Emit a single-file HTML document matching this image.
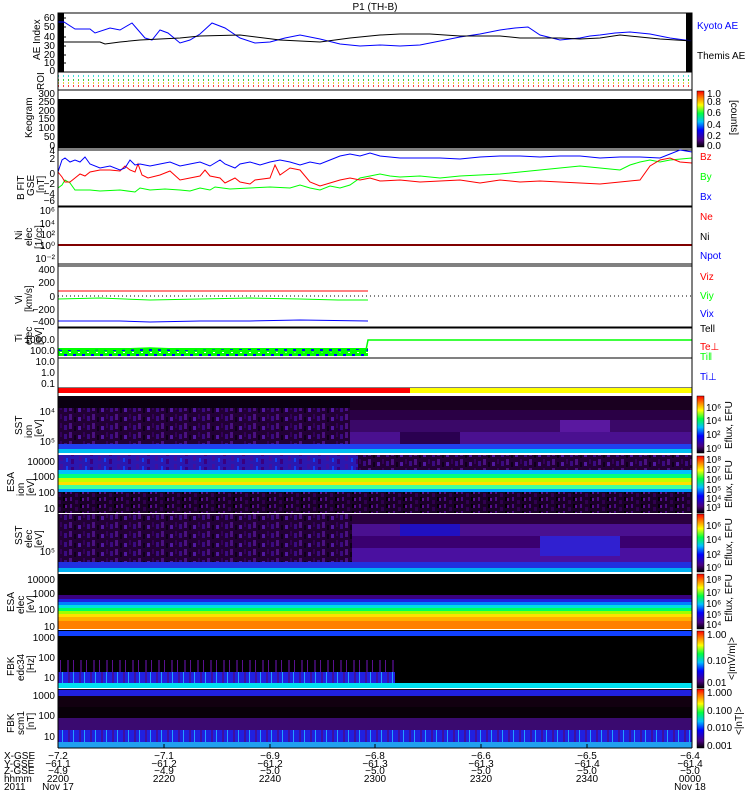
<!DOCTYPE html>
<html><head><meta charset="utf-8"><style>
body{margin:0;background:#fff;width:750px;height:800px;overflow:hidden}
svg{display:block}
text{font-family:"Liberation Sans",sans-serif;font-size:10px}
</style></head><body>
<svg width="750" height="800" viewBox="0 0 750 800" xmlns="http://www.w3.org/2000/svg">
<defs>
<linearGradient id="cb" x1="0" y1="1" x2="0" y2="0">
<stop offset="0" stop-color="#000"/><stop offset="0.12" stop-color="#4a0080"/><stop offset="0.3" stop-color="#0000ff"/><stop offset="0.45" stop-color="#00c0ff"/><stop offset="0.6" stop-color="#00ff40"/><stop offset="0.75" stop-color="#ffff00"/><stop offset="0.88" stop-color="#ff8000"/><stop offset="1" stop-color="#ff0000"/>
</linearGradient>
<pattern id="pn" width="23" height="9" patternUnits="userSpaceOnUse">
<rect width="23" height="9" fill="#220035"/><rect x="0" width="3" height="6" fill="#4a1080"/><rect x="5" y="3" width="2" height="5" fill="#0e0018"/><rect x="9" y="3" width="3" height="4" fill="#5018a0"/><rect x="14" width="2" height="5" fill="#33005a"/><rect x="18" y="2" width="3" height="5" fill="#3a0a80"/>
</pattern>
<pattern id="pd" width="17" height="7" patternUnits="userSpaceOnUse">
<rect width="17" height="7" fill="#1a0028"/><rect x="2" width="2" height="4" fill="#4a0a80"/><rect x="7" y="3" width="3" height="4" fill="#300050"/><rect x="12" width="2" height="4" fill="#000"/><rect x="14" y="1" width="2" height="3" fill="#5a1090"/>
</pattern>
<pattern id="pb" width="19" height="8" patternUnits="userSpaceOnUse">
<rect width="19" height="8" fill="#2a18b0"/><rect x="3" width="3" height="5" fill="#4010a0"/><rect x="9" y="2" width="2" height="4" fill="#1040f0"/><rect x="14" y="3" width="3" height="5" fill="#3a0080"/>
</pattern>
<pattern id="pf" width="13" height="10" patternUnits="userSpaceOnUse">
<rect width="13" height="10" fill="#000"/><rect x="2" width="2" height="10" fill="#3a0a60"/><rect x="8" width="1" height="10" fill="#5a1090"/>
</pattern>
<pattern id="pfb" width="11" height="10" patternUnits="userSpaceOnUse">
<rect width="11" height="10" fill="#2020e0"/><rect x="2" width="2" height="10" fill="#4010a0"/><rect x="7" width="1" height="10" fill="#20a0ff"/>
</pattern>
<pattern id="pt" width="9" height="8" patternUnits="userSpaceOnUse">
<rect width="9" height="8" fill="#00ff00"/><rect x="1" y="2" width="3" height="2" fill="#0000ff"/><rect x="5" y="5" width="3" height="2" fill="#0000ff"/><rect x="6" y="0" width="2" height="1" fill="#fff"/>
</pattern>
</defs>

<text x="375" y="10" text-anchor="middle">P1 (TH-B)</text>

<!-- AE panel -->
<rect x="58" y="13" width="6" height="59" fill="#000"/>
<rect x="686" y="13" width="6" height="59" fill="#000"/>
<polyline fill="none" stroke="#0000ff" stroke-width="1" points="58,22 64,22 75,29 90,29 95,33 110,28 120,30 132,23 145,38 152,40 160,30 168,33 180,43 190,40 200,34 212,23 225,28 240,38 255,43 270,42 285,38 300,35 320,39 340,44 360,46 380,45 400,46 420,45 440,41 460,37 480,34 500,30 515,28 528,27 540,35 560,40 580,38 590,36 600,35 615,33 630,32 650,34 670,38 692,41"/>
<polyline fill="none" stroke="#000" stroke-width="1" points="58,42 100,42 105,44 120,42 140,40 160,39 180,38 200,36 240,35 280,40 320,42 350,38 380,35 400,34 430,34 460,36 500,36 520,38 560,38 580,39 600,38 620,35 640,37 660,39 692,41"/>
<rect x="58" y="13" width="634" height="59" fill="none" stroke="#000"/>
<g stroke="#000">
<line x1="58" y1="18" x2="66" y2="18"/><line x1="58" y1="27" x2="66" y2="27"/><line x1="58" y1="37" x2="66" y2="37"/><line x1="58" y1="46" x2="66" y2="46"/><line x1="58" y1="55" x2="66" y2="55"/><line x1="58" y1="63" x2="66" y2="63"/>
</g>
<g text-anchor="end"><text x="55" y="21">60</text><text x="55" y="30">50</text><text x="55" y="40">40</text><text x="55" y="49">30</text><text x="55" y="58">20</text><text x="55" y="66">10</text><text x="55" y="74">0</text></g>
<text transform="translate(40,60) rotate(-90)">AE Index</text>
<text x="697" y="29" fill="#0000ff">Kyoto AE</text>
<text x="697" y="59">Themis AE</text>

<!-- ROI -->
<g stroke-dasharray="1 4" stroke-width="1.5">
<line x1="58" y1="76" x2="692" y2="76" stroke="#00d0d0"/>
<line x1="58" y1="80" x2="692" y2="80" stroke="#00c000"/>
<line x1="58" y1="83" x2="692" y2="83" stroke="#e0c000"/>
<line x1="58" y1="86" x2="692" y2="86" stroke="#ff0000"/>
</g>
<text transform="translate(44,90) rotate(-90)" font-size="9">ROI</text>

<!-- Keogram -->
<rect x="58" y="99" width="634" height="49" fill="#000"/>
<rect x="58" y="90" width="634" height="58" fill="none" stroke="#000"/>
<g text-anchor="end"><text x="55" y="97">300</text><text x="55" y="105">250</text><text x="55" y="114">200</text><text x="55" y="122">150</text><text x="55" y="131">100</text><text x="55" y="140">50</text><text x="55" y="149">0</text></g>
<text transform="translate(32,138) rotate(-90)">Keogram</text>
<rect x="697" y="91" width="7" height="56" fill="url(#cb)" stroke="#000" stroke-width="0.5"/>
<g font-size="9"><text x="707" y="97">1.0</text><text x="707" y="105">0.8</text><text x="707" y="116">0.6</text><text x="707" y="128">0.4</text><text x="707" y="139">0.2</text><text x="707" y="149">0.0</text></g>
<text transform="translate(731,100) rotate(90)" font-size="9">[counts]</text>

<!-- B -->
<rect x="58" y="150" width="634" height="56" fill="none" stroke="#000"/>
<polyline fill="none" stroke="#00ff00" points="58,188 62,185 65,180 70,183 75,190 90,190 100,191 120,190 135,192 140,188 150,190 165,189 180,190 190,191 200,188 210,190 215,187 230,189 250,188 270,187 290,188 300,185 310,188 320,190 330,186 340,188 350,185 360,178 370,176 380,174 390,176 400,177 420,176 440,178 460,176 480,175 500,174 520,172 540,170 560,168 580,166 600,168 620,170 630,165 640,162 650,160 660,162 670,160 692,158"/>
<polyline fill="none" stroke="#ff0000" stroke-width="1" points="58,172 62,177 65,182 70,182 75,178 80,174 85,176 90,172 100,170 110,170 120,171 125,166 130,170 135,172 138,164 142,175 148,178 160,175 170,171 180,180 190,178 200,176 205,170 210,176 220,178 225,183 235,178 240,182 250,184 255,180 270,178 275,165 280,175 290,168 300,170 310,182 320,186 330,183 340,180 350,178 360,180 370,178 380,181 400,180 420,182 440,181 460,180 480,183 500,180 520,182 540,181 560,182 580,183 600,184 620,182 640,180 650,166 660,160 670,158 680,162 692,163"/>
<polyline fill="none" stroke="#0000ff" stroke-width="1" points="58,172 62,160 65,158 70,162 75,160 80,162 85,157 90,164 100,168 110,166 120,170 125,168 130,160 135,165 140,164 150,166 160,164 170,162 180,166 190,164 200,162 210,166 220,160 225,164 235,168 240,164 250,162 260,165 270,162 280,160 290,162 300,165 310,162 320,164 330,160 340,156 350,154 360,156 370,153 380,156 400,158 420,158 440,158 460,159 480,157 500,156 520,156 540,157 560,156 580,156 600,158 620,157 640,157 660,158 670,154 680,150 692,152"/>
<g text-anchor="end"><text x="55" y="154">4</text><text x="55" y="162">2</text><text x="55" y="177">0</text><text x="55" y="187">−2</text><text x="55" y="197">−4</text><text x="55" y="204">−6</text></g>
<text transform="translate(24,200) rotate(-90)" font-size="9">B FIT</text>
<text transform="translate(34,196) rotate(-90)" font-size="9">GSE</text>
<text transform="translate(44,193) rotate(-90)" font-size="9">[nT]</text>
<text x="700" y="160" fill="#ff0000">Bz</text><text x="700" y="180" fill="#00ff00">By</text><text x="700" y="200" fill="#0000ff">Bx</text>

<!-- Ni -->
<rect x="58" y="207" width="634" height="57" fill="none" stroke="#000"/>
<line x1="58" y1="245" x2="692" y2="245" stroke="#000" stroke-width="2"/>
<line x1="58" y1="245" x2="692" y2="245" stroke="#ff0000"/>
<g text-anchor="end" font-size="9"><text x="55" y="214">10⁶</text><text x="55" y="227">10⁴</text><text x="55" y="238">10²</text><text x="55" y="249">10⁰</text><text x="55" y="262">10⁻²</text></g>
<text transform="translate(22,240) rotate(-90)" font-size="9">Ni</text>
<text transform="translate(32,246) rotate(-90)" font-size="9">elec</text>
<text transform="translate(42,249) rotate(-90)" font-size="9">[1/cc]</text>
<text x="700" y="220" fill="#ff0000">Ne</text><text x="700" y="240">Ni</text><text x="700" y="259" fill="#0000ff">Npot</text>

<!-- Vi -->
<rect x="58" y="266" width="634" height="61" fill="none" stroke="#000"/>
<line x1="58" y1="291" x2="368" y2="291" stroke="#ff0000"/>
<line x1="58" y1="296" x2="692" y2="296" stroke="#000" stroke-dasharray="1 3"/>
<polyline fill="none" stroke="#00ff00" points="58,299 100,298 150,300 200,299 250,298 300,299 338,300 368,300"/>
<polyline fill="none" stroke="#0000ff" points="58,321 120,321 150,322 200,321 250,321 300,320 368,321"/>
<g text-anchor="end"><text x="55" y="273">400</text><text x="55" y="286">200</text><text x="55" y="300">0</text><text x="55" y="313">−200</text><text x="55" y="325">−400</text></g>
<text transform="translate(22,304) rotate(-90)" font-size="9">Vi</text>
<text transform="translate(32,312) rotate(-90)" font-size="9">[km/s]</text>
<text x="700" y="280" fill="#ff0000">Viz</text><text x="700" y="299" fill="#00ff00">Viy</text><text x="700" y="317" fill="#0000ff">Vix</text>

<!-- Ti -->
<rect x="58" y="328" width="634" height="30" fill="none" stroke="#000"/>
<rect x="58" y="358" width="634" height="30" fill="none" stroke="#000"/>
<rect x="58" y="348" width="310" height="8" fill="url(#pt)"/>
<polyline fill="none" stroke="#00ff00" stroke-width="1.5" points="60,349 100,350 150,348 200,350 260,351 300,352 340,352 366,350 368,340 692,340"/>
<g text-anchor="end"><text x="55" y="343">1000.0</text><text x="55" y="354">100.0</text><text x="55" y="365">10.0</text><text x="55" y="376">1.0</text><text x="55" y="387">0.1</text></g>
<text transform="translate(22,342) rotate(-90)" font-size="9">Ti</text>
<text transform="translate(32,345) rotate(-90)" font-size="9">elec</text>
<text transform="translate(42,345) rotate(-90)" font-size="9">[eV]</text>
<text x="700" y="332">Tell</text><text x="700" y="350" fill="#ff0000">Te⊥</text><text x="700" y="360" fill="#00ff00">Ti‖</text><text x="700" y="380" fill="#0000ff">Ti⊥</text>

<!-- mode bar -->
<rect x="58" y="388" width="352" height="5" fill="#ff0000"/>
<rect x="410" y="388" width="282" height="5" fill="#ffff00"/>

<!-- SST ion -->
<rect x="58" y="396" width="634" height="57" fill="url(#pn)"/>
<rect x="58" y="396" width="634" height="12" fill="#0a0010"/>
<rect x="350" y="396" width="342" height="14" fill="#1a0020"/>
<rect x="350" y="410" width="342" height="10" fill="#2a0045"/>
<rect x="350" y="420" width="342" height="12" fill="#3a0868"/>
<rect x="350" y="432" width="342" height="12" fill="#4a1090"/>
<rect x="400" y="432" width="60" height="12" fill="#2a0050"/>
<rect x="560" y="420" width="50" height="12" fill="#5a18a0"/>
<rect x="58" y="444" width="634" height="5" fill="#2040f0"/>
<rect x="58" y="449" width="634" height="4" fill="#00c0f0"/>
<rect x="697" y="396" width="7" height="57" fill="url(#cb)" stroke="#000" stroke-width="0.5"/>
<g text-anchor="end" font-size="9"><text x="55" y="415">10⁴</text><text x="55" y="445">10⁵</text></g>
<text transform="translate(22,435) rotate(-90)" font-size="9">SST</text>
<text transform="translate(32,438) rotate(-90)" font-size="9">ion</text>
<text transform="translate(42,437) rotate(-90)" font-size="9">[eV]</text>
<g font-size="8"><text x="706" y="411">10⁶</text><text x="706" y="424">10⁴</text><text x="706" y="438">10²</text><text x="706" y="452">10⁰</text></g>
<text transform="translate(732,449) rotate(-90)" font-size="9">Eflux, EFU</text>

<!-- ESA ion -->
<rect x="58" y="455" width="634" height="58" fill="url(#pd)"/>
<rect x="58" y="455" width="300" height="15" fill="url(#pb)"/>
<rect x="358" y="455" width="334" height="15" fill="url(#pn)"/>
<rect x="58" y="470" width="634" height="4" fill="#00c0ff"/>
<rect x="58" y="474" width="634" height="4" fill="#00ff80"/>
<rect x="58" y="478" width="634" height="4" fill="#c0ff00"/>
<rect x="58" y="482" width="634" height="3" fill="#ffe000"/>
<rect x="58" y="485" width="634" height="4" fill="#40ffa0"/>
<rect x="58" y="489" width="634" height="3" fill="#00a0ff"/>
<rect x="697" y="456" width="7" height="57" fill="url(#cb)" stroke="#000" stroke-width="0.5"/>
<g text-anchor="end" font-size="9"><text x="55" y="465">10000</text><text x="55" y="480">1000</text><text x="55" y="496">100</text><text x="55" y="512">10</text></g>
<text transform="translate(14,492) rotate(-90)" font-size="9">ESA</text>
<text transform="translate(24,496) rotate(-90)" font-size="9">ion</text>
<text transform="translate(34,496) rotate(-90)" font-size="9">[eV]</text>
<g font-size="7"><text x="706" y="463">10⁸</text><text x="706" y="473">10⁷</text><text x="706" y="483">10⁶</text><text x="706" y="493">10⁵</text><text x="706" y="502">10⁴</text><text x="706" y="511">10³</text></g>
<text transform="translate(732,508) rotate(-90)" font-size="9">Eflux, EFU</text>

<!-- SST elec -->
<rect x="58" y="514" width="634" height="58" fill="url(#pn)"/>
<rect x="352" y="514" width="340" height="10" fill="#2a0040"/>
<rect x="352" y="524" width="340" height="12" fill="#4a1090"/>
<rect x="352" y="536" width="340" height="12" fill="#3a0070"/>
<rect x="352" y="548" width="340" height="14" fill="#4a10a0"/>
<rect x="540" y="536" width="80" height="20" fill="#3020d0"/>
<rect x="400" y="524" width="60" height="12" fill="#2010c0"/>
<rect x="58" y="562" width="634" height="6" fill="#2030e0"/>
<rect x="58" y="568" width="634" height="4" fill="#00b0f0"/>
<rect x="697" y="514" width="7" height="58" fill="url(#cb)" stroke="#000" stroke-width="0.5"/>
<g text-anchor="end" font-size="9"><text x="55" y="555">10⁵</text></g>
<text transform="translate(22,545) rotate(-90)" font-size="9">SST</text>
<text transform="translate(32,548) rotate(-90)" font-size="9">elec</text>
<text transform="translate(42,548) rotate(-90)" font-size="9">[eV]</text>
<g font-size="8"><text x="706" y="529">10⁶</text><text x="706" y="543">10⁴</text><text x="706" y="558">10²</text><text x="706" y="571">10⁰</text></g>
<text transform="translate(732,566) rotate(-90)" font-size="9">Eflux, EFU</text>

<!-- ESA elec -->
<rect x="58" y="574" width="634" height="55" fill="#000"/>
<rect x="58" y="595" width="634" height="4" fill="#3a0080"/>
<rect x="58" y="599" width="634" height="3" fill="#2020e0"/>
<rect x="58" y="602" width="634" height="3" fill="#0080ff"/>
<rect x="58" y="605" width="634" height="3" fill="#00e0e0"/>
<rect x="58" y="608" width="634" height="3" fill="#00ff60"/>
<rect x="58" y="611" width="634" height="3" fill="#a0ff00"/>
<rect x="58" y="614" width="634" height="3" fill="#ffe000"/>
<rect x="58" y="617" width="634" height="4" fill="#ffb000"/>
<rect x="58" y="621" width="634" height="8" fill="#ff8000"/>
<rect x="697" y="574" width="7" height="55" fill="url(#cb)" stroke="#000" stroke-width="0.5"/>
<g text-anchor="end" font-size="9"><text x="55" y="583">10000</text><text x="55" y="597">1000</text><text x="55" y="613">100</text><text x="55" y="630">10</text></g>
<text transform="translate(14,612) rotate(-90)" font-size="9">ESA</text>
<text transform="translate(24,614) rotate(-90)" font-size="9">elec</text>
<text transform="translate(34,613) rotate(-90)" font-size="9">[eV]</text>
<g font-size="7"><text x="706" y="583">10⁸</text><text x="706" y="596">10⁷</text><text x="706" y="607">10⁶</text><text x="706" y="618">10⁵</text><text x="706" y="628">10⁴</text></g>
<text transform="translate(732,622) rotate(-90)" font-size="9">Eflux, EFU</text>

<!-- FBK 1 -->
<rect x="58" y="630" width="634" height="58" fill="#000"/>
<rect x="58" y="631" width="634" height="5" fill="#1040ff"/>
<rect x="58" y="660" width="337" height="12" fill="url(#pf)"/>
<rect x="58" y="672" width="337" height="11" fill="url(#pfb)"/>
<rect x="58" y="683" width="634" height="5" fill="#00e0f0"/>
<rect x="697" y="631" width="7" height="57" fill="url(#cb)" stroke="#000" stroke-width="0.5"/>
<g text-anchor="end" font-size="9"><text x="55" y="641">1000</text><text x="55" y="661">100</text><text x="55" y="681">10</text></g>
<text transform="translate(14,676) rotate(-90)" font-size="9">FBK</text>
<text transform="translate(24,681) rotate(-90)" font-size="9">edc34</text>
<text transform="translate(34,673) rotate(-90)" font-size="9">[Hz]</text>
<g font-size="9"><text x="707" y="638">1.00</text><text x="707" y="664">0.10</text><text x="707" y="686">0.01</text></g>
<text transform="translate(735,680) rotate(-90)" font-size="9">&lt;|mV/m|&gt;</text>

<!-- FBK 2 -->
<rect x="58" y="689" width="634" height="59" fill="#120010"/>
<rect x="58" y="690" width="634" height="6" fill="#2020e0"/>
<rect x="58" y="707" width="634" height="11" fill="#080008"/>
<rect x="58" y="718" width="634" height="12" fill="#3a0a70"/>
<rect x="58" y="730" width="634" height="12" fill="url(#pfb)"/>
<rect x="58" y="742" width="634" height="6" fill="#20a0f0"/>
<rect x="697" y="689" width="7" height="59" fill="url(#cb)" stroke="#000" stroke-width="0.5"/>
<g text-anchor="end" font-size="9"><text x="55" y="699">1000</text><text x="55" y="719">100</text><text x="55" y="740">10</text></g>
<text transform="translate(14,733) rotate(-90)" font-size="9">FBK</text>
<text transform="translate(24,735) rotate(-90)" font-size="9">scm1</text>
<text transform="translate(34,730) rotate(-90)" font-size="9">[nT]</text>
<g font-size="9"><text x="707" y="696">1.000</text><text x="707" y="714">0.100</text><text x="707" y="731">0.010</text><text x="707" y="749">0.001</text></g>
<text transform="translate(742,735) rotate(-90)" font-size="9">&lt;|nT|&gt;</text>

<line x1="58" y1="13" x2="58" y2="748" stroke="#000"/>
<line x1="692" y1="13" x2="692" y2="748" stroke="#000"/>
<line x1="58" y1="748" x2="692" y2="748" stroke="#000"/>
<g stroke="#000">
<line x1="164" y1="744" x2="164" y2="748"/><line x1="270" y1="744" x2="270" y2="748"/><line x1="375" y1="744" x2="375" y2="748"/><line x1="481" y1="744" x2="481" y2="748"/><line x1="587" y1="744" x2="587" y2="748"/>
</g>

<!-- bottom labels -->
<g font-size="9">
<text x="4" y="759">X-GSE</text><text x="4" y="767">Y-GSE</text><text x="4" y="774">Z-GSE</text><text x="4" y="782">hhmm</text><text x="4" y="790">2011</text>
</g>
<g font-size="9" text-anchor="middle">
<text x="58" y="759">−7.2</text><text x="58" y="767">−61.1</text><text x="58" y="774">−4.9</text><text x="58" y="782">2200</text><text x="58" y="790">Nov 17</text>
<text x="164" y="759">−7.1</text><text x="164" y="767">−61.2</text><text x="164" y="774">−4.9</text><text x="164" y="782">2220</text>
<text x="270" y="759">−6.9</text><text x="270" y="767">−61.2</text><text x="270" y="774">−5.0</text><text x="270" y="782">2240</text>
<text x="375" y="759">−6.8</text><text x="375" y="767">−61.3</text><text x="375" y="774">−5.0</text><text x="375" y="782">2300</text>
<text x="481" y="759">−6.6</text><text x="481" y="767">−61.3</text><text x="481" y="774">−5.0</text><text x="481" y="782">2320</text>
<text x="587" y="759">−6.5</text><text x="587" y="767">−61.4</text><text x="587" y="774">−5.0</text><text x="587" y="782">2340</text>
<text x="690" y="759">−6.4</text><text x="690" y="767">−61.4</text><text x="690" y="774">−5.0</text><text x="690" y="782">0000</text><text x="690" y="790">Nov 18</text>
</g>
</svg>
</body></html>
